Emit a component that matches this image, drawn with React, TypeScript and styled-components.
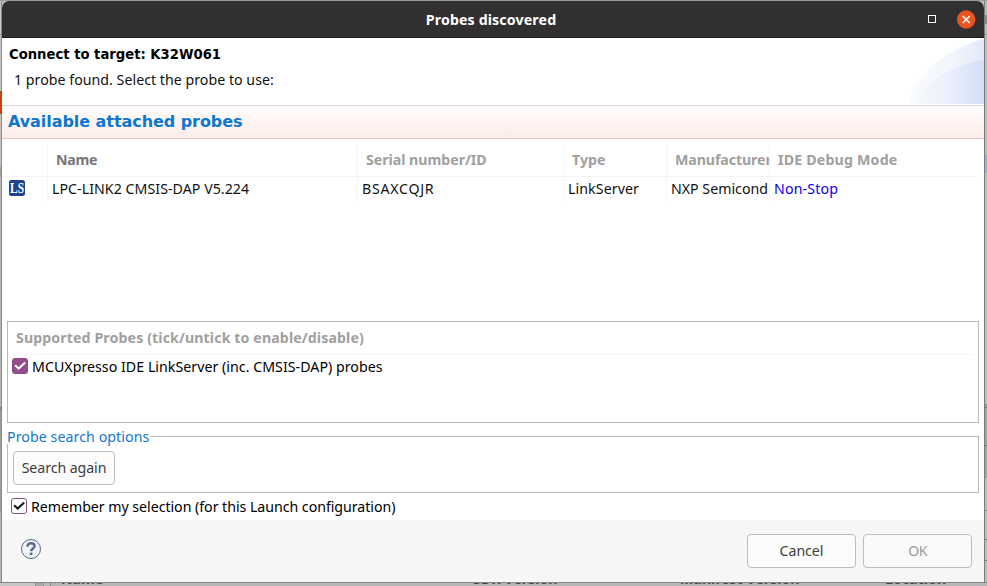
import React from "react";
import styled, { createGlobalStyle } from "styled-components";

const GlobalStyle = createGlobalStyle`
  * { box-sizing: border-box; }
  body {
    margin: 0;
    overflow: hidden;
    font: 14.2px/20px "Noto Sans", "Open Sans", sans-serif;
    color: #111;
    background: #bdbdbd;
  }
`;

const Desktop = styled.div`
  display: grid;
  grid-template-columns: 2px 982px 3px;
  grid-template-rows: 1px 581px 4px;
  width: 987px;
  height: 586px;
  overflow: hidden;
`;

const TopEdge = styled.div`
  grid-column: 1 / -1;
  background: #999;
`;

const LeftEdge = styled.div`
  border-right: 1px solid #8b8b8b;
  background: linear-gradient(
    #c8c8c8 0 33px, #999 33px 34px, #c4c4c4 34px 166px,
    #a9a094 166px 175px, #b5b5b5 175px 406px,
    #777 406px 408px, #9d9d9d 408px 512px, #b5b5b5 512px
  );
`;

const OrangeMark = styled.div`
  width: 2px;
  height: 23px;
  margin-top: 90px;
  background: #c4430f;
`;

const RightEdge = styled.div`
  border-left: 1px solid #7c7c7c;
  background: linear-gradient(
    #bcbcbc 0 14px, #8a8a8a 14px 23px, #bcbcbc 23px 33px, #999 33px 34px,
    #bdbdbd 34px 154px, #a4b0bc 154px 172px, #bfbfbf 172px 403px,
    #999 403px 406px, #777 406px 407px, #a2a2a2 407px 444px, #777 444px 445px,
    #a2a2a2 445px 477px, #bdbdbd 477px 509px, #8e8e8e 509px 510px,
    #bdbdbd 510px 538px, #777 538px 539px, #bdbdbd 539px 559px,
    #777 559px 560px, #bdbdbd 560px
  );
`;

const BottomEdge = styled.div`
  grid-column: 1 / -1;
  display: grid;
  grid-template-columns: 61px 412px 207px 205px auto;
  grid-template-rows: 3px;
  align-items: end;
  border-top: 1px solid #858887;
  background: linear-gradient(90deg, #c6c6c6 0 35px, #989898 35px 36px, #aaa 36px 43px, #989898 43px 44px, #bbb 44px 50px, #888 50px 51px, #b5b5b5 51px);
  overflow: hidden;
`;

const BehindLabel = styled.span`
  height: 18px;
  font-weight: 700;
  font-size: 14.2px;
  line-height: 18px;
  color: #454545;
  white-space: nowrap;
  margin-bottom: -2px;
`;

const Dialog = styled.main`
  display: flex;
  flex-direction: column;
  background: #fff;
  border-radius: 7px 7px 0 0;
  overflow: hidden;
`;

const TitleBar = styled.header`
  display: grid;
  grid-template-columns: 1fr auto 1fr;
  align-items: center;
  height: 37px;
  flex: none;
  padding-right: 8px;
  background: #322f30;
  border-bottom: 1px solid #1d1b1c;
`;

const Title = styled.h1`
  grid-column: 2;
  margin: 1px 0 0 4px;
  font-size: 14.2px;
  line-height: 20px;
  font-weight: 700;
  letter-spacing: 0.13px;
  color: #fff;
`;

const WindowControls = styled.div`
  display: flex;
  justify-content: flex-end;
  align-items: center;
  gap: 21px;
`;

const MaximizeBox = styled.span`
  width: 8px;
  height: 8px;
  border: 1px solid #fff;
`;

const Glyph = styled.svg`
  display: block;
  flex: none;
`;

const Intro = styled.section`
  display: flex;
  justify-content: space-between;
  height: 68px;
  flex: none;
  border-bottom: 1px solid #d9d9db;
`;

const IntroText = styled.div`
  padding: 6px 0 0 7px;
`;

const TargetName = styled.h2`
  margin: 0;
  font: bold 14.67px/20px "DejaVu Sans Condensed", "DejaVu Sans", sans-serif;
  font-stretch: semi-condensed;
  color: #000;
`;

const Hint = styled.p`
  margin: 6px 0 0 5px;
  letter-spacing: 0.02px;
`;

const SectionTitle = styled.h2`
  margin: 0;
  flex: none;
  height: 33px;
  padding: 0 6px;
  font: bold 16px/32px "DejaVu Sans", sans-serif;
  letter-spacing: -0.06px;
  color: #0a78d0;
  background: linear-gradient(#fffdfd, #fdece8);
  border-bottom: 1px solid #e3cbc6;
`;

const ProbeTable = styled.div`
  display: grid;
  grid-template-columns: 45px 310px 206px 103px 103px 1fr;
  grid-template-rows: 33px 24px;
  flex: none;
  height: 182px;
  padding: 5px 6px 0 0;
`;

const Cell = styled.div<{ $pad?: number; $track?: number; $link?: boolean }>`
  overflow: hidden;
  white-space: nowrap;
  line-height: 23px;
  padding-left: ${(p) => p.$pad ?? 4}px;
  border-left: 1px solid #f5f5f5;
  letter-spacing: ${(p) => p.$track ?? 0}px;
  color: ${(p) => (p.$link ? "#0f00e6" : "#111")};
  &:nth-child(6n + 1) { border-left-color: transparent; }
`;

const IconCell = styled(Cell)`
  padding-top: 3px;
`;

const HeadCell = styled(Cell)<{ $strong?: boolean }>`
  padding-left: ${(p) => p.$pad ?? 8}px;
  line-height: 32px;
  font-weight: 700;
  color: ${(p) => (p.$strong ? "#767674" : "#a0a09e")};
  border-bottom: 1px solid #f4f4f4;
`;

const SupportedBox = styled.section`
  flex: none;
  height: 102px;
  margin: 0 5px;
  border: 1px solid #b9b9b9;
`;

const SupportedTitle = styled.h3`
  margin: 0 4px 0 0;
  height: 33px;
  padding-left: 8px;
  font-size: 14.2px;
  line-height: 32px;
  font-weight: 700;
  letter-spacing: 0.1px;
  color: #a0a09e;
  border-bottom: 1px solid #f6f6f6;
`;

const CheckRow = styled.label<{ $inset: number; $track: number; $height: number }>`
  display: flex;
  align-items: center;
  gap: 4px;
  flex: none;
  height: ${(p) => p.$height}px;
  padding-left: ${(p) => p.$inset}px;
  letter-spacing: ${(p) => p.$track}px;
  color: #000;
`;

const CheckBox = styled.span<{ $filled?: boolean }>`
  display: grid;
  place-items: center;
  width: 16px;
  height: 16px;
  margin-bottom: 2px;
  border-radius: 3px;
  border: 1px solid ${(p) => (p.$filled ? "#8f4787" : "#85507f")};
  background: ${(p) => (p.$filled ? "#924d8b" : "#fff")};
`;

const SearchGroup = styled.section`
  flex: none;
  height: 70px;
  margin: 0 5px;
`;

const GroupLegend = styled.div`
  display: flex;
  align-items: center;
  height: 29px;
  line-height: 26px;
  letter-spacing: 0.07px;
  color: #1278cc;
  &::after {
    content: "";
    flex: 1;
    align-self: flex-end;
    height: 15px;
    border: solid #b9b9b9;
    border-width: 1px 1px 0 0;
  }
`;

const LegendText = styled.span`
  margin: -2px 1px 0 0;
`;

const GroupBody = styled.div`
  height: 49px;
  margin-top: -8px;
  padding: 7px 5px 0;
  border: solid #b9b9b9;
  border-width: 0 1px 1px;
`;

const Button = styled.button<{ $width: number; $track?: number }>`
  width: ${(p) => p.$width}px;
  height: 34px;
  padding: 0 0 1px;
  font: inherit;
  letter-spacing: ${(p) => p.$track ?? 0}px;
  color: #3c3c3c;
  background: #fcfcfc;
  border: 1px solid #bdbdbd;
  border-radius: 4px;
  &:disabled { color: #9a9a9a; background: #fafafa; }
`;

const Footer = styled.footer`
  display: flex;
  align-items: center;
  gap: 7px;
  flex: 1;
  padding: 0 12px 0 18px;
  background: #f6f6f6;
`;

const HelpSlot = styled.div`
  flex: 1;
  margin-top: -4px;
`;

const CloseIcon = () => (
  <Glyph width="19" height="19" viewBox="0 0 19 19">
    <circle cx="9.2" cy="9.5" r="9.2" fill="#e95420" />
    <path d="M5.7 6l7 7M12.7 6l-7 7" stroke="#fff" strokeWidth="1.5" />
  </Glyph>
);

const CurveArt = () => (
  <Glyph width="77" height="66" viewBox="0 0 77 66">
    <defs>
      <linearGradient id="outer" x1="0" x2="1">
        <stop offset="0" stopColor="#f9fbfe" />
        <stop offset="0.6" stopColor="#f2f5fc" />
        <stop offset="1" stopColor="#e1e9f9" />
      </linearGradient>
      <linearGradient id="inner" x1="0" x2="1">
        <stop offset="0" stopColor="#f7f9fd" />
        <stop offset="0.5" stopColor="#eaeffb" />
        <stop offset="1" stopColor="#d3def7" />
      </linearGradient>
    </defs>
    <path d="M1 66C6 42 35 11 77 1V66Z" fill="url(#outer)" />
    <path d="M7 66C16 47 43 26 77 22V66Z" fill="url(#inner)" />
  </Glyph>
);

const LinkServerIcon = () => (
  <Glyph width="16" height="16" viewBox="0 0 16 16">
    <rect width="16" height="16" rx="2.5" fill="#1f4489" />
    <text x="8" y="12.8" textAnchor="middle" textLength="14" lengthAdjust="spacingAndGlyphs" fontFamily="Liberation Serif, serif" fontWeight="700" fontSize="14" fill="#fff">LS</text>
  </Glyph>
);

const Tick = ({ color }: { color: string }) => (
  <Glyph width="14" height="14" viewBox="0 0 14 14">
    <path d="M2.1 6.2L5.7 9.6L12.2 3.6" fill="none" stroke={color} strokeWidth="2" />
  </Glyph>
);

const HelpIcon = () => (
  <Glyph width="22" height="22" viewBox="0 0 22 22">
    <circle cx="11" cy="11" r="9.5" fill="#eff2f8" stroke="#5c6880" strokeWidth="1" />
    <path d="M7.4 8.8C7.4 6.4 8.9 5.2 11.1 5.2C13.3 5.2 14.6 6.4 14.6 8.1C14.6 10.4 11.1 10.5 11.1 13.2" fill="none" stroke="#5c6a8e" strokeWidth="2.4" />
    <rect x="9.8" y="14.6" width="2.6" height="2.4" rx="0.6" fill="#5c6a8e" />
  </Glyph>
);

export default function App() {
  return (
    <>
      <GlobalStyle />
      <Desktop>
        <TopEdge />
        <LeftEdge><OrangeMark /></LeftEdge>
        <Dialog>
          <TitleBar>
            <Title>Probes discovered</Title>
            <WindowControls>
              <MaximizeBox />
              <CloseIcon />
            </WindowControls>
          </TitleBar>
          <Intro>
            <IntroText>
              <TargetName>Connect to target: K32W061</TargetName>
              <Hint>1 probe found. Select the probe to use:</Hint>
            </IntroText>
            <CurveArt />
          </Intro>
          <SectionTitle>Available attached probes</SectionTitle>
          <ProbeTable>
            <HeadCell />
            <HeadCell $strong $track={-0.3}>Name</HeadCell>
            <HeadCell $track={-0.03}>Serial number/ID</HeadCell>
            <HeadCell>Type</HeadCell>
            <HeadCell $track={-0.1}>Manufacturer</HeadCell>
            <HeadCell $track={0.18}>IDE Debug Mode</HeadCell>
            <IconCell $pad={6}><LinkServerIcon /></IconCell>
            <Cell $track={0.04}>LPC-LINK2 CMSIS-DAP V5.224</Cell>
            <Cell $track={0.72}>BSAXCQJR</Cell>
            <Cell $track={0.08}>LinkServer</Cell>
            <Cell>NXP Semicond</Cell>
            <Cell $link $track={0.14}>Non-Stop</Cell>
          </ProbeTable>
          <SupportedBox>
            <SupportedTitle>Supported Probes (tick/untick to enable/disable)</SupportedTitle>
            <CheckRow $inset={4} $track={0.03} $height={23}>
              <CheckBox $filled><Tick color="#fff" /></CheckBox>
              MCUXpresso IDE LinkServer (inc. CMSIS-DAP) probes
            </CheckRow>
          </SupportedBox>
          <SearchGroup>
            <GroupLegend><LegendText>Probe search options</LegendText></GroupLegend>
            <GroupBody>
              <Button $width={102} $track={-0.08}>Search again</Button>
            </GroupBody>
          </SearchGroup>
          <CheckRow $inset={9} $track={-0.04} $height={27}>
            <CheckBox><Tick color="#111" /></CheckBox>
            Remember my selection (for this Launch configuration)
          </CheckRow>
          <Footer>
            <HelpSlot><HelpIcon /></HelpSlot>
            <Button $width={109} $track={-0.05}>Cancel</Button>
            <Button $width={109} $track={-0.7} disabled>OK</Button>
          </Footer>
        </Dialog>
        <RightEdge />
        <BottomEdge>
          <span />
          <BehindLabel>Name</BehindLabel>
          <BehindLabel>SDK Version</BehindLabel>
          <BehindLabel>Manifest Version</BehindLabel>
          <BehindLabel>Location</BehindLabel>
        </BottomEdge>
      </Desktop>
    </>
  );
}
